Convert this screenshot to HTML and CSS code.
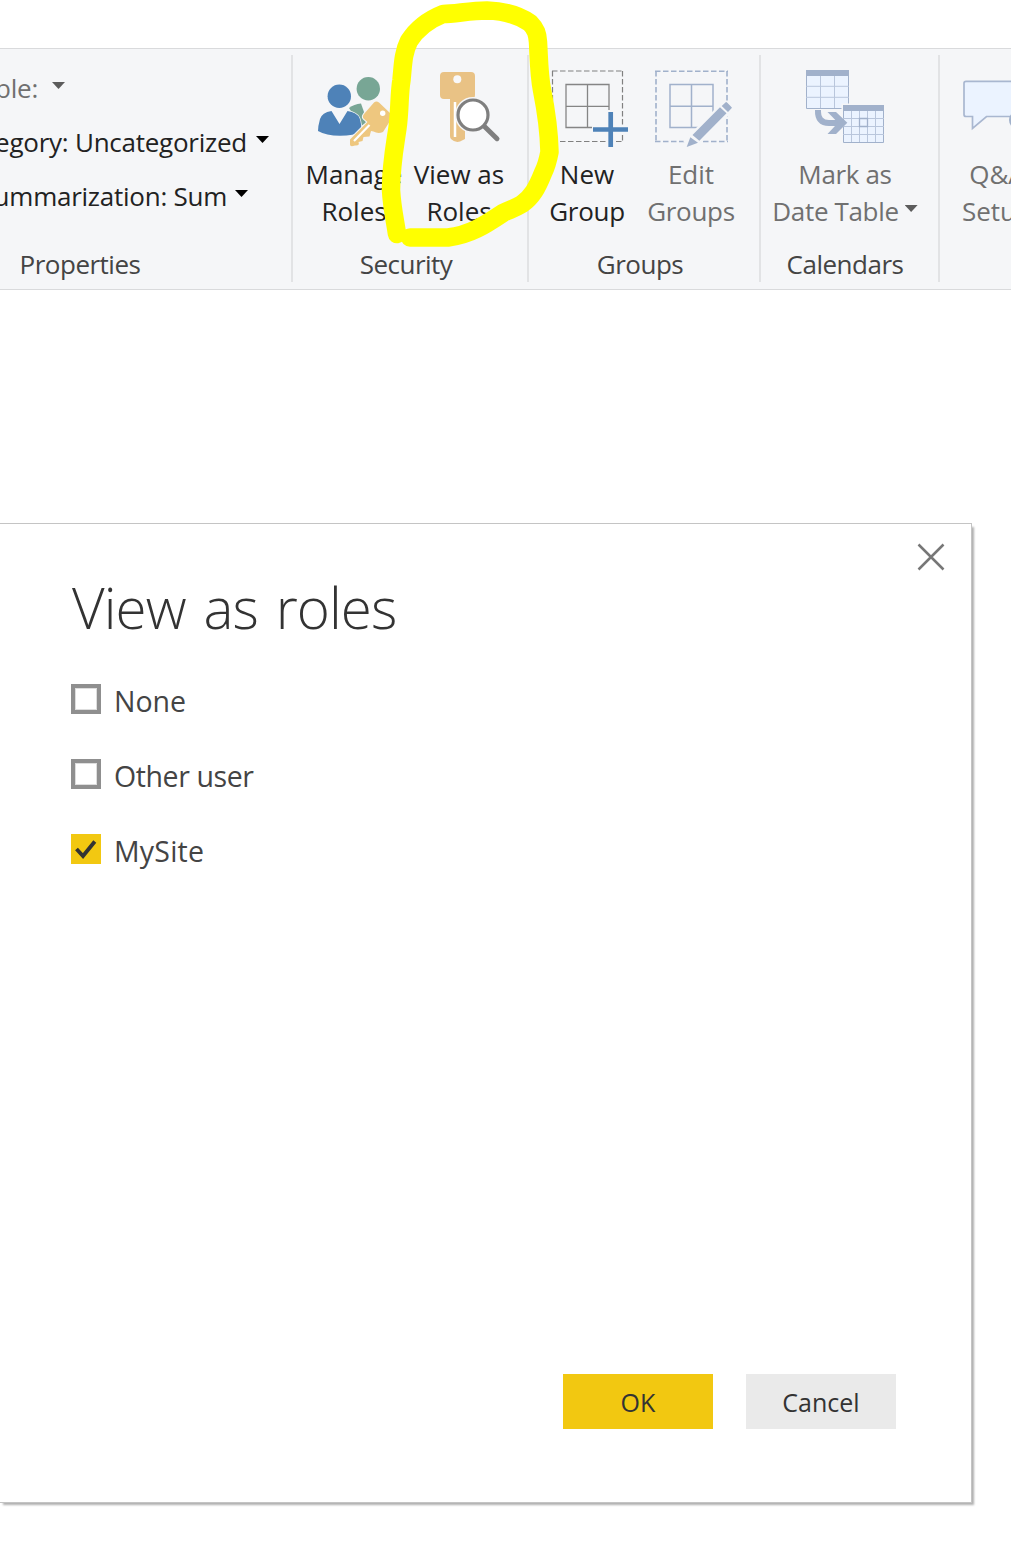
FILE: index.html
```
<!DOCTYPE html>
<html lang="en">
<head>
<meta charset="utf-8">
<title>View as roles</title>
<link rel="stylesheet" href="styles.css">
</head>
<body>
<div class="page">
  <header class="ribbon">
    <section class="group properties">
      <div class="fields">
        <div class="field field-table disabled"><span>Home Table:</span><i class="caret"></i></div>
        <div class="field field-category"><span>Data Category: Uncategorized</span><i class="caret"></i></div>
        <div class="field field-summary"><span>Default Summarization: Sum</span><i class="caret"></i></div>
      </div>
      <div class="group-name">Properties</div>
    </section>
    <i class="separator"></i>
    <section class="group security">
      <div class="tools">
        <div class="tool manage">
          <svg class="icon" viewBox="314 69 80 78">
            <circle cx="368.3" cy="88.7" r="11.7" fill="#78a695"/>
            <path d="M349 108Q354 104 361 103.5L364 112 366 123 361 126Z" fill="#78a695"/>
            <circle cx="339.3" cy="96.3" r="13" fill="#f5f6f8"/>
            <circle cx="339.3" cy="96.3" r="11.7" fill="#4e82b8"/>
            <path d="M331.500 111Q322 112.500 320 119Q318 126 318 131Q326 135.700 340 135.700Q354 135.700 361 131.500Q362 125 359.500 118Q357 112.500 347.500 111L339.500 124Z" fill="#4e82b8" stroke="#f5f6f8" stroke-width="1.400" paint-order="stroke"/>
            <path d="M374 102.500Q376.300 100.500 379 102.500L390 113V121L383 132Q378 134 373.500 131.500L371 131 369.500 136.500 363.500 137 362.500 141 358.500 142Q360 146 355 145.500Q350 147.500 350 144.500V139.500L367.500 122 363.500 118.500Q362 116.500 364 114Z" fill="#eec77f" stroke="#f5f6f8" stroke-width="2" paint-order="stroke"/>
            <circle cx="382.700" cy="113.300" r="2.700" fill="#fff"/>
            <path d="M369.500 125L354 141" stroke="#fff" stroke-width="2.200"/>
          </svg>
          <span>Manage</span><span>Roles</span>
        </div>
        <div class="tool view">
          <svg class="icon" viewBox="419 69 80 78">
            <path d="M444 72H471Q475 72 475 76V95Q475 99 471 99H465V139L460 141.500Q455 143 451 139Q450 138 450 136V99H444Q440 99 440 95V76Q440 72 444 72Z" fill="#e9c285"/>
            <circle cx="457.300" cy="79.300" r="4" fill="#f8f8fa"/>
            <path d="M455 102V137" stroke="#fff" stroke-width="2.500"/>
            <circle cx="473" cy="115" r="18" fill="#f5f6f8"/>
            <path d="M484 126L497 138.700" stroke="#7f7f7f" stroke-width="5" stroke-linecap="round"/>
            <circle cx="473" cy="115" r="15" fill="#fff" stroke="#7f7f7f" stroke-width="3.200"/>
          </svg>
          <span>View as</span><span>Roles</span>
        </div>
      </div>
      <div class="group-name">Security</div>
    </section>
    <i class="separator"></i>
    <section class="group groups">
      <div class="tools">
        <div class="tool">
          <svg class="icon" viewBox="547 69 80 78" fill="none">
            <path d="M552 71H623.500M552 141.500H623.500" stroke="#808080" stroke-width="1.200" stroke-dasharray="5.500 2.500"/>
            <path d="M552.500 71V142M622.500 71V142" stroke="#808080" stroke-width="1.200" stroke-dasharray="5.500 2.500"/>
            <path d="M566 84.500H609V127.500H566ZM587.500 84.500V127.500M566 106.300H609" stroke="#858585" stroke-width="1.300"/>
            <path d="M610.700 110V149M592 129.500H630" stroke="#f5f6f8" stroke-width="8"/>
            <path d="M610.700 112V147M593 129.500H628" stroke="#4e82b8" stroke-width="4.700"/>
          </svg>
          <span>New</span><span class="tight">Group</span>
        </div>
        <div class="tool disabled">
          <svg class="icon" viewBox="651 69 80 78" fill="none">
            <path d="M655 71.300H728M655 141.500H728" stroke="#a1b1cb" stroke-width="1.600" stroke-dasharray="5.500 2.500"/>
            <path d="M656 71V142M727 71V142" stroke="#a1b1cb" stroke-width="1.600" stroke-dasharray="5.500 2.500"/>
            <path d="M670 84.500H713V127.500H670ZM691.500 84.500V127.500M670 106.300H713" stroke="#a1b1cb" stroke-width="1.500"/>
            <path d="M688 146L729 105" stroke="#f5f6f8" stroke-width="14"/>
            <path d="M686.700 147L690.300 137.300 698 142.700ZM692.500 135L720 107.300 726.500 113.300 699.300 140.700ZM721.700 106L726 102Q727 102 732 107.700L728 112Z" fill="#a1b1cb"/>
          </svg>
          <span>Edit</span><span class="tight">Groups</span>
        </div>
      </div>
      <div class="group-name">Groups</div>
    </section>
    <i class="separator"></i>
    <section class="group calendars">
      <div class="tools">
        <div class="tool disabled">
          <svg class="icon" viewBox="805 69 80 78" fill="none">
            <path d="M806.500 70.500H848.500V108.500H806.500Z" fill="#ebf3ff" stroke="#a1b1cb"/>
            <path d="M820.500 76V108M834.500 76V108M806 86.300H849M806 97.300H849" stroke="#b9c6dc"/>
            <path d="M806 70H849V76H806Z" fill="#a1b1cb"/>
            <path d="M841.500 103.500H886V145H841.500Z" fill="#f5f6f8"/>
            <path d="M843.500 105.500H883.500V142.500H843.500Z" fill="#ebf3ff" stroke="#a1b1cb"/>
            <path d="M851.500 111V142M859.500 111V142M867.500 111V142M875.500 111V142M843 118.500H884M843 126.500H884M843 134.500H884" stroke="#b9c6dc"/>
            <path d="M843 105H884V111H843Z" fill="#a1b1cb"/>
            <path d="M859.500 118.500H867.500V126.500H859.500Z" fill="#ebf3ff" stroke="#a1b1cb" stroke-width="1.300"/>
            <path d="M818 110Q817.500 123 829 123H840" stroke="#a1b1cb" stroke-width="6"/>
            <path d="M827.500 112H836L847.300 122.700 836 134H827.500L838 122.700Z" fill="#a1b1cb"/>
          </svg>
          <span>Mark as</span><span class="with-caret">Date Table<i class="caret"></i></span>
        </div>
      </div>
      <div class="group-name">Calendars</div>
    </section>
    <i class="separator"></i>
    <section class="group qna">
      <div class="tools">
        <div class="tool disabled">
          <svg class="icon" viewBox="957 69 80 78">
            <path d="M966 81.300H1030V116.500H986.500L972.500 128.500V116.500H966Q964 116.500 964 114.500V83.300Q964 81.300 966 81.300Z" fill="#ebf3ff" stroke="#a9b7d0" stroke-width="1.700"/>
            <circle cx="1018" cy="120" r="9" fill="#a1b1cb"/>
          </svg>
          <span>Q&amp;A</span><span>Setup</span>
        </div>
      </div>
    </section>
  </header>

  <main class="dialog">
    <svg class="close" viewBox="0 0 28 28"><path d="M1.500 1.500L26.500 26.500M26.500 1.500L1.500 26.500" stroke="#777" stroke-width="2.500"/></svg>
    <h1>View as roles</h1>
    <div class="options">
      <label class="option none"><i class="box"></i><span>None</span></label>
      <label class="option other"><i class="box"></i><span>Other user</span></label>
      <label class="option site"><i class="box checked"><svg viewBox="0 0 30 30"><path d="M5.500 15L12 22 23.800 7.500" fill="none" stroke="#333" stroke-width="3.800"/></svg></i><span>MySite</span></label>
    </div>
    <div class="actions">
      <button class="button primary">OK</button>
      <button class="button">Cancel</button>
    </div>
  </main>

  <svg class="marker" viewBox="0 0 1011 300">
    <path d="M397 234C395 220 392 208 391 190C391 165 395 145 397.500 128C400 110 399 95 401.500 80C403 65 403 53 409 41C416 30 428 20 443 14C455 14 470 10.500 487 10.500C505 11 520 16 530 23C536 29 537.500 34 538 42C539 60 539 75 542 90C546 110 549 130 549.500 152C548 160 546 167 543 173C537 188 532 197 522 204C514 209 508 210 503 213C485 225 470 235 448 237.500H410"/>
  </svg>
</div>
</body>
</html>
```
FILE: styles.css
```
body {
  margin: 0;
  background: #fff;
  font-family: "Open Sans", "Noto Sans", sans-serif;
  font-size: 26px;
  color: #222;
}

.page {
  position: relative;
  box-sizing: border-box;
  height: 1541px;
  padding-top: 48px;
  overflow: hidden;
}

/* Ribbon */
.ribbon {
  display: flex;
  box-sizing: border-box;
  width: 1200px;
  height: 242px;
  margin-left: -131px;
  background: #f5f6f8;
  border-top: 1px solid #d9dadc;
  border-bottom: 1px solid #d9dadc;
}

.separator {
  flex: none;
  width: 2px;
  margin: 6px 0 7px;
  background: #e2e3e5;
}

.group {
  display: flex;
  flex: none;
  flex-direction: column;
  justify-content: space-between;
  box-sizing: border-box;
  padding: 20px 0 7px;
}

.properties { width: 422px; padding-top: 12px; }
.security { width: 234px; padding-right: 8px; }
.groups { width: 230px; padding-right: 8px; }
.calendars { width: 177px; padding-right: 9px; }
.qna { width: 109px; padding-left: 5px; }

.group-name {
  line-height: 36px;
  text-align: center;
  letter-spacing: -0.5px;
  color: #444;
}

.field {
  display: flex;
  align-items: center;
  justify-content: flex-end;
  line-height: 54px;
  white-space: nowrap;
  letter-spacing: -0.25px;
}

.field .caret { margin: 0 0 5px 9px; }
.field-table { padding-right: 226px; }
.field-table .caret { margin-left: 14px; }
.field-category { padding-right: 22px; }
.field-summary { padding-right: 43px; }
.field-summary .caret { margin-left: 8px; }

.caret {
  flex: none;
  width: 13px;
  height: 7px;
  background: #000;
  clip-path: polygon(0 0, 100% 0, 50% 100%);
}

.disabled { color: #707070; }
.disabled .caret { background: #5c5c5c; }

.tools { display: flex; justify-content: center; }
.security .tools { padding-left: 2px; }
.groups .tools { padding-right: 2px; }

.tool {
  display: flex;
  flex-direction: column;
  align-items: center;
  width: 104px;
  line-height: 37px;
  white-space: nowrap;
}

.view { width: 106px; }
.calendars .tool { width: 160px; letter-spacing: -0.35px; }
.tight { letter-spacing: -0.3px; }

.icon {
  width: 80px;
  height: 78px;
  margin-bottom: 9px;
  overflow: visible;
}

.with-caret { display: flex; align-items: center; }
.with-caret .caret { margin: 0 0 6px 6px; }

/* Dialog */
.dialog {
  position: relative;
  display: flex;
  flex-direction: column;
  box-sizing: border-box;
  width: 973px;
  height: 980px;
  margin: 233px 0 0 -1px;
  padding: 44px 75px 73px 71px;
  background: #fff;
  border: 1px solid #c4c4c4;
  box-shadow: 3px 3px 2px -1px #b0b0b0;
}

.close {
  position: absolute;
  top: 19px;
  right: 26px;
  width: 28px;
  height: 28px;
}

h1 {
  margin: 0 0 36px;
  padding-left: 1px;
  font-size: 56.5px;
  font-weight: 300;
  line-height: 80px;
  letter-spacing: -0.9px;
  word-spacing: 4px;
  color: #333;
}

.options { display: flex; flex-direction: column; gap: 45px; }

.option {
  display: flex;
  align-items: center;
  gap: 13px;
  height: 30px;
  font-size: 28.5px;
  color: #444;
}

.option span { padding-top: 3px; }
.other { letter-spacing: -0.4px; }
.site { letter-spacing: 0.2px; }

.box {
  box-sizing: border-box;
  width: 30px;
  height: 30px;
  border: 4px solid #8f8f8f;
  box-shadow: inset 0 0 0 1px #dedede;
}

.box.checked { background: #f2c811; border: 0; box-shadow: none; }
.box svg { display: block; }

.actions {
  display: flex;
  justify-content: flex-end;
  gap: 33px;
  margin-top: auto;
}

.button {
  width: 150px;
  height: 55px;
  padding: 0;
  border: 0;
  background: #eaeaea;
  font: 25px "Open Sans", "Noto Sans", sans-serif;
  color: #333;
}

.primary { background: #f2c811; }

/* Hand-drawn highlight over the ribbon */
.marker {
  position: absolute;
  top: 0;
  left: 0;
  width: 1011px;
  height: 300px;
}

.marker path {
  fill: none;
  stroke: #ff0;
  stroke-width: 18.5px;
  stroke-linecap: round;
  stroke-linejoin: round;
}
```
